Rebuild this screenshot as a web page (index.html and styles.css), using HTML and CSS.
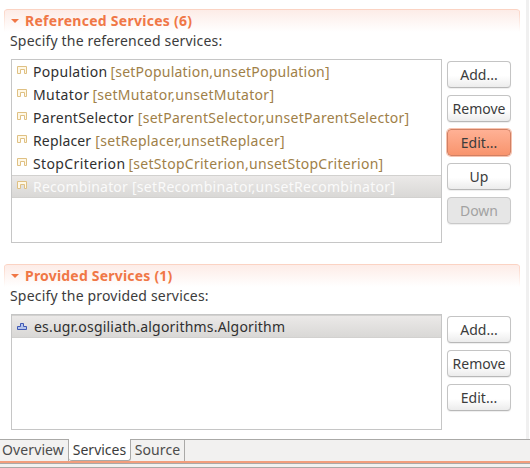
FILE: index.html
```html
<!DOCTYPE html>
<html lang="en">
<head>
<meta charset="utf-8">
<title>Services</title>
<link rel="stylesheet" href="styles.css">
</head>
<body>
<svg class="defs" width="0" height="0" aria-hidden="true">
  <symbol id="ref" viewBox="0 0 10 8"><path d="M.5 7.500V.5H9.500V7.500H7.500V3.500H3.500V7.500Z" fill="#fff8e6" stroke="#dfc083"/></symbol>
  <symbol id="prov" viewBox="0 0 10 7"><path d="M3.500 .5H6.500V3.500H9.500V6.500H.5V3.500H3.500Z" fill="#b4c4ec" stroke="#4059b5"/></symbol>
</svg>
<main class="form">
  <section class="section referenced">
    <h2 class="heading"><i class="twistie"></i><span class="t-ref">Referenced Services (6)</span></h2>
    <p class="hint">Specify the referenced services:</p>
    <div class="body">
      <ul class="list">
        <li class="population"><svg class="icon"><use href="#ref"/></svg><span>Population</span> <em>[setPopulation,unsetPopulation]</em></li>
        <li class="mutator"><svg class="icon"><use href="#ref"/></svg><span>Mutator</span> <em>[setMutator,unsetMutator]</em></li>
        <li class="parent"><svg class="icon"><use href="#ref"/></svg><span>ParentSelector</span> <em>[setParentSelector,unsetParentSelector]</em></li>
        <li class="replacer"><svg class="icon"><use href="#ref"/></svg><span>Replacer</span> <em>[setReplacer,unsetReplacer]</em></li>
        <li class="stop"><svg class="icon"><use href="#ref"/></svg><span>StopCriterion</span> <em>[setStopCriterion,unsetStopCriterion]</em></li>
        <li class="recombinator selected faded"><svg class="icon"><use href="#ref"/></svg><span>Recombinator</span> <em>[setRecombinator,unsetRecombinator]</em></li>
      </ul>
      <div class="buttons">
        <button>Add...</button>
        <button>Remove</button>
        <button class="hot">Edit...</button>
        <button>Up</button>
        <button disabled>Down</button>
      </div>
    </div>
  </section>
  <section class="section provided">
    <h2 class="heading"><i class="twistie"></i><span class="t-prov">Provided Services (1)</span></h2>
    <p class="hint">Specify the provided services:</p>
    <div class="body">
      <ul class="list">
        <li class="selected"><svg class="icon prov"><use href="#prov"/></svg><span class="algo">es.ugr.osgiliath.algorithms.Algorithm</span></li>
      </ul>
      <div class="buttons">
        <button>Add...</button>
        <button>Remove</button>
        <button>Edit...</button>
      </div>
    </div>
  </section>
</main>
<nav class="tabs">
  <span class="tab overview">Overview</span><span class="tab active">Services</span><span class="tab source">Source</span>
</nav>
<div class="accent"></div>
</body>
</html>
```
FILE: styles.css
```css
* { box-sizing: border-box; }
body {
  margin: 0; width: 530px; height: 468px; overflow: hidden;
  display: flex; flex-direction: column;
  background: #fff; color: #3c3c3c;
  font: 14px/20px "Noto Sans", sans-serif;
}
.defs { position: absolute; }
.form {
  height: 439px; width: 529px; padding: 9px 5px 0 4px;
  border-right: 3px solid #f0f0f0;
}
.section { width: 516px; height: 255px; }
.provided { height: 175px; }
.heading {
  height: 23px; margin: 0; padding-left: 6px;
  display: flex; align-items: center;
  border-top: 1px solid #fbd3c3; border-radius: 4px 4px 0 0;
  background:
    linear-gradient(#fbd3c3, #fff) left / 1px 100% no-repeat,
    linear-gradient(#fbd3c3, #fff) right / 1px 100% no-repeat,
    linear-gradient(#fdece7, #fff);
  color: #f07746; font-size: 14px; line-height: 22px;
}
.t-ref { letter-spacing: .27px; }
.t-prov { letter-spacing: .2px; }
.twistie {
  width: 8px; margin: 0 6px 0 1px;
  border: 4px solid transparent; border-top: 4px solid #f07746; border-bottom: 0;
}
.hint { margin: 0; padding-left: 6px; height: 27px; line-height: 18px; white-space: nowrap; letter-spacing: .18px; }
.body { display: flex; padding-left: 7px; gap: 5px; }
.list {
  width: 431px; height: 184px; margin: 0; padding: 0;
  list-style: none; border: 1px solid #c6c6c6;
}
.provided .list { height: 116px; }
.list li {
  height: 23px; display: flex; align-items: center;
  padding-left: 5px; white-space: nowrap; line-height: 23px;
  color: #303030;
}
.icon { width: 10px; height: 8px; margin: -3px 6px 0 0; flex: none; }
.icon.prov { height: 7px; margin: -1px 7px 0 0; }
.list em { font-style: normal; color: #a08048; margin-left: 3px; }
.population span { letter-spacing: .3px; }
.population em { letter-spacing: .22px; }
.mutator span { letter-spacing: .4px; }
.mutator em { letter-spacing: .3px; }
.parent span { letter-spacing: .3px; }
.parent em { letter-spacing: .29px; margin-left: 4px; }
.replacer span { letter-spacing: .15px; }
.replacer em { letter-spacing: .3px; margin-left: 4px; }
.stop span { letter-spacing: .38px; }
.stop em { letter-spacing: .28px; }
.recombinator span { letter-spacing: .17px; }
.recombinator em { letter-spacing: .29px; margin-left: 4px; }
.algo { letter-spacing: .2px; }
.list .selected {
  background: linear-gradient(#ebe9e8, #d9d8d6);
  border-top: 1px solid #d2d1cf; border-bottom: 1px solid #d2d1cf;
}
.list .faded span, .list .faded em { color: #fafafa; }
.buttons { display: flex; flex-direction: column; gap: 7px; padding-top: 2px; }
button {
  width: 64px; height: 27px; padding: 0;
  border: 1px solid #c4c4c4; border-bottom-color: #b8b8b8; border-radius: 4px;
  background: linear-gradient(#fff 55%, #ececec);
  box-shadow: 0 1px 1px #eee;
  font: inherit; color: #3c3c3c;
}
.hot { background: linear-gradient(#ffb195, #f8946d); border-color: #d18063; box-shadow: 0 0 0 1px #f8c3af; }
button:disabled { background: #e6e6e6; border-color: #c9c9c9; color: #a2a2a2; }
.tabs {
  height: 22px; display: flex; border-top: 1px solid #aaa9a7;
  background: #f2f1f0; white-space: nowrap; color: #4c4c4c;
}
.tab { height: 21px; line-height: 20px; border-right: 1px solid #aaa9a7; text-align: center; }
.overview { width: 69px; padding-right: 2px; letter-spacing: .1px; }
.active { width: 62px; background: #fff; border-bottom: 1px solid #aaa9a7; border-radius: 0 0 3px 3px; color: #3c3c3c; margin-top: -1px; height: 22px; line-height: 22px; }
.source { width: 54px; letter-spacing: .1px; }
.accent {
  height: 7px; background: #f2f1f0;
  border-top: 2px solid #f29e7d; border-bottom: 1px solid #aaa9a7;
  box-shadow: inset 0 1px #aaa9a7;
}
```
